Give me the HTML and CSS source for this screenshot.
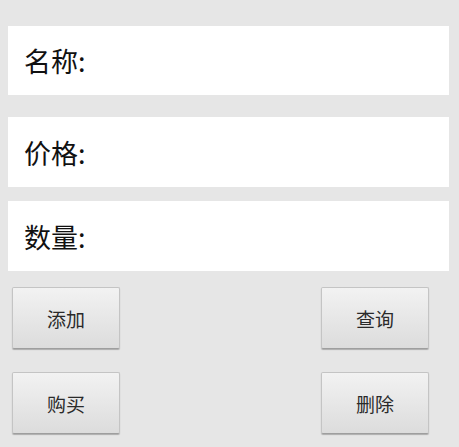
FILE: index.html
```html
<!DOCTYPE html>
<html lang="zh">
<head>
	<meta charset="UTF-8">
	<title>商品</title>
	<link rel="stylesheet" href="styles.css">
</head>
<body>
	<!-- 输入框 -->
	<ul class="fields">
		<li class="f1">名称:</li>
		<li class="f2">价格:</li>
		<li class="f3">数量:</li>
	</ul>
	<!-- 按钮 -->
	<div class="btns">
		<div class="row r1">
			<input type="button" value="添加">
			<input type="button" value="查询">
		</div>
		<div class="row r2">
			<input type="button" value="购买">
			<input type="button" value="删除">
		</div>
	</div>
</body>
</html>
```

FILE: styles.css
```css
*{
	margin:0;
	padding:0;
}
ul{
	list-style: none;
}
body{
	background:#e6e6e6;
	font-family:"Noto Sans CJK SC","Noto Sans",sans-serif;
	width:459px;
	height:447px;
	overflow:hidden;
}
.fields{
	padding:26px 10px 0 8px;
}
.fields li{
	background:#fff;
	height:70px;
	display:flex;
	align-items:center;
	padding-left:16px;
	font-size:27px;
	color:#111;
}
.fields .f1{
	height:69px;
	margin-bottom:22px;
}
.fields .f2{
	margin-bottom:14px;
}
.btns{
	padding:16px 30px 0 12px;
}
.row{
	display:flex;
	justify-content:space-between;
}
.r2{
	margin-top:23px;
}
.row input{
	width:108px;
	height:62px;
	border:1px solid #c4c4c4;
	border-bottom-color:#9e9e9e;
	border-radius:2px;
	background:linear-gradient(#f2f2f2,#dcdcdc);
	box-shadow:0 1px 1px rgba(0,0,0,.25);
	font-family:"Noto Sans CJK SC",sans-serif;
	font-size:19px;
	color:#2a2a2a;
}
```
